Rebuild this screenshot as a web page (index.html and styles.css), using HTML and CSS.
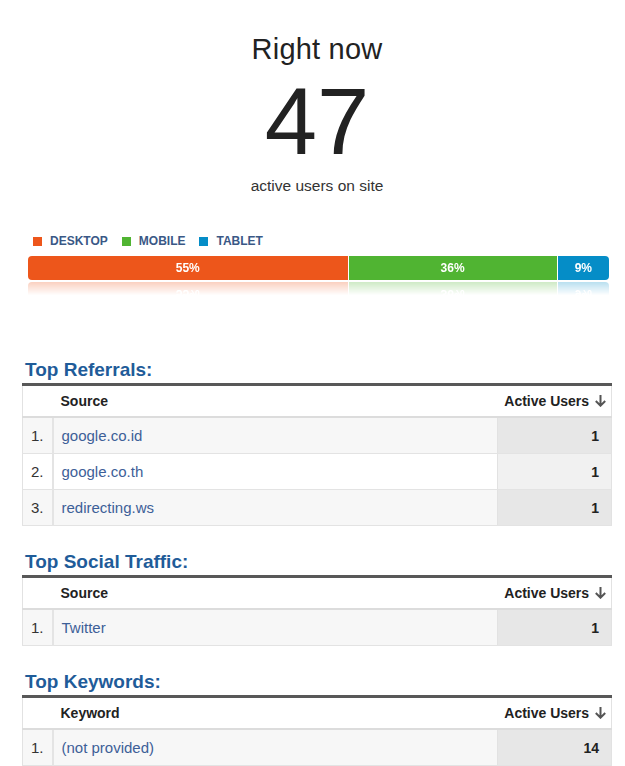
FILE: index.html
```html
<!DOCTYPE html>
<html lang="en">
<head>
<meta charset="utf-8">
<title>Right now</title>
<link rel="stylesheet" href="styles.css">
</head>
<body>
<div class="page">
  <div class="hero">
    <div class="hero-title">Right now</div>
    <div class="hero-count">47</div>
    <div class="hero-sub">active users on site</div>
  </div>

  <div class="devices">
    <ul class="legend">
      <li class="legend-item"><span class="swatch swatch-desktop"></span>DESKTOP</li>
      <li class="legend-item"><span class="swatch swatch-mobile"></span>MOBILE</li>
      <li class="legend-item"><span class="swatch swatch-tablet"></span>TABLET</li>
    </ul>
    <div class="bar">
      <div class="seg seg-desktop" style="width:55%">55%</div>
      <div class="seg seg-mobile" style="width:36%">36%</div>
      <div class="seg seg-tablet" style="width:9%">9%</div>
    </div>
  </div>

  <section class="panel panel-first">
    <h2 class="panel-title">Top Referrals:</h2>
    <table class="data">
      <colgroup><col class="col-num"><col><col class="col-val"></colgroup>
      <thead>
        <tr><th class="c-num"></th><th class="c-src">Source</th><th class="c-val">Active Users <svg class="sort" width="13" height="13" viewBox="0 0 13 13"><path d="M6.5 1V11.5M1.8 7L6.5 11.7L11.2 7" fill="none" stroke="#555" stroke-width="2"/></svg></th></tr>
      </thead>
      <tbody>
        <tr class="odd"><td class="c-num">1.</td><td class="c-src"><a href="#">google.co.id</a></td><td class="c-val">1</td></tr>
        <tr class="even"><td class="c-num">2.</td><td class="c-src"><a href="#">google.co.th</a></td><td class="c-val">1</td></tr>
        <tr class="odd"><td class="c-num">3.</td><td class="c-src"><a href="#">redirecting.ws</a></td><td class="c-val">1</td></tr>
      </tbody>
    </table>
  </section>

  <section class="panel">
    <h2 class="panel-title">Top Social Traffic:</h2>
    <table class="data">
      <colgroup><col class="col-num"><col><col class="col-val"></colgroup>
      <thead>
        <tr><th class="c-num"></th><th class="c-src">Source</th><th class="c-val">Active Users <svg class="sort" width="13" height="13" viewBox="0 0 13 13"><path d="M6.5 1V11.5M1.8 7L6.5 11.7L11.2 7" fill="none" stroke="#555" stroke-width="2"/></svg></th></tr>
      </thead>
      <tbody>
        <tr class="odd"><td class="c-num">1.</td><td class="c-src"><a href="#">Twitter</a></td><td class="c-val">1</td></tr>
      </tbody>
    </table>
  </section>

  <section class="panel">
    <h2 class="panel-title">Top Keywords:</h2>
    <table class="data">
      <colgroup><col class="col-num"><col><col class="col-val"></colgroup>
      <thead>
        <tr><th class="c-num"></th><th class="c-src">Keyword</th><th class="c-val">Active Users <svg class="sort" width="13" height="13" viewBox="0 0 13 13"><path d="M6.5 1V11.5M1.8 7L6.5 11.7L11.2 7" fill="none" stroke="#555" stroke-width="2"/></svg></th></tr>
      </thead>
      <tbody>
        <tr class="odd"><td class="c-num">1.</td><td class="c-src"><a href="#">(not provided)</a></td><td class="c-val">14</td></tr>
      </tbody>
    </table>
  </section>
</div>
</body>
</html>
```

FILE: styles.css
```css
html, body {
  margin: 0;
  padding: 0;
  background: #fff;
}

body {
  font-family: "Liberation Sans", Arial, sans-serif;
  color: #222;
}

.page {
  padding: 33px 13px 0 22px;
}

.hero {
  display: flex;
  flex-direction: column;
  align-items: center;
}

.hero-title {
  font-size: 29px;
  line-height: 33px;
  color: #222;
  letter-spacing: 0.2px;
}

.hero-count {
  margin-top: 9px;
  font-size: 94px;
  line-height: 94px;
  color: #222;
}

.hero-sub {
  margin-top: 8px;
  font-size: 15.5px;
  line-height: 18px;
  color: #333;
}

.devices {
  margin: 39px 3px 0 6px;
}

.legend {
  list-style: none;
  margin: 0;
  padding: 0 0 0 5px;
  display: flex;
  gap: 14px;
}

.legend-item {
  display: flex;
  align-items: center;
  gap: 8px;
  font-size: 12px;
  line-height: 14px;
  font-weight: bold;
  color: #3a5886;
}

.swatch {
  width: 9px;
  height: 9px;
  display: block;
}

.swatch-desktop, .seg-desktop { background: #ed561b; }
.swatch-mobile, .seg-mobile { background: #50b432; }
.swatch-tablet, .seg-tablet { background: #058dc7; }

.bar {
  margin-top: 8px;
  height: 24px;
  display: flex;
  border-radius: 4px;
  overflow: hidden;
  -webkit-box-reflect: below 2px linear-gradient(to bottom, transparent 45%, rgba(0, 0, 0, 0.28));
}

.seg {
  box-sizing: border-box;
  height: 24px;
  line-height: 24px;
  text-align: center;
  color: #fff;
  font-size: 12px;
  font-weight: bold;
}

.seg + .seg {
  border-left: 1px solid #fff;
}

.panel {
  margin-top: 25px;
}

.panel-first {
  margin-top: 79px;
}

.panel-title {
  margin: 0;
  padding: 0 0 2px 3px;
  font-size: 19px;
  line-height: 22px;
  font-weight: bold;
  color: #1f5c99;
  border-bottom: 3px solid #585858;
}

.data {
  width: 100%;
  border-collapse: collapse;
  table-layout: fixed;
  border-left: 1px solid #e2e2e2;
  border-right: 1px solid #e2e2e2;
}

.col-num { width: 30px; }
.col-val { width: 114px; }

.data th {
  height: 30px;
  padding: 0;
  background: #fff;
  border-bottom: 2px solid #dcdcdc;
  font-size: 14px;
  font-weight: bold;
  color: #222;
  text-align: left;
  vertical-align: middle;
}

.data th.c-src {
  padding-left: 8px;
}

.data th.c-val {
  text-align: right;
  padding-right: 4px;
  white-space: nowrap;
}

.sort {
  vertical-align: -1px;
  margin-left: 1px;
}

.data td {
  height: 35px;
  padding: 0;
  border-bottom: 1px solid #e3e3e3;
  font-size: 15px;
  vertical-align: middle;
}

.data td.c-num {
  text-align: right;
  padding-right: 8px;
  color: #333;
  border-right: 2px solid #e4e4e4;
}

.data td.c-src {
  padding-left: 8px;
}

.data td.c-src a {
  color: #3d6098;
  text-decoration: none;
}

.data td.c-val {
  text-align: right;
  padding-right: 12px;
  font-size: 14px;
  font-weight: bold;
  color: #222;
  border-left: 1px solid #e2e2e2;
}

.odd td { background: #f7f7f7; }
.odd td.c-val { background: #e7e7e7; }
.even td { background: #fff; }
.even td.c-val { background: #f1f1f1; }
```
